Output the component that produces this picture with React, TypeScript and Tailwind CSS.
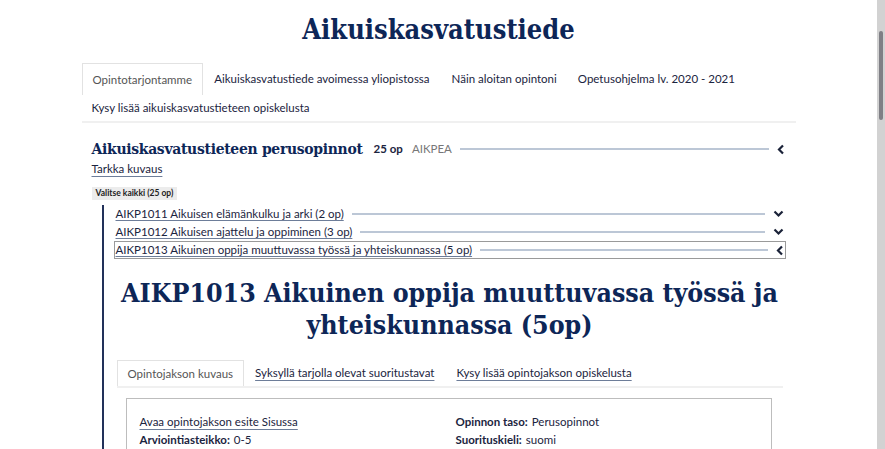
const navy = 'text-[#0d2657]';

function ChevronDown() {
  return (
    <svg width="11" height="8" viewBox="0 0 11 8" className="shrink-0">
      <path d="M1.5 1.5 L5.5 5.5 L9.5 1.5" fill="none" stroke="#1a2238" strokeWidth="2.2" />
    </svg>
  );
}

function ChevronLeft() {
  return (
    <svg width="8" height="11" viewBox="0 0 8 11" className="shrink-0">
      <path d="M6 1.5 L2 5.5 L6 9.5" fill="none" stroke="#1a2238" strokeWidth="2.2" />
    </svg>
  );
}

const courses = [
  { label: 'AIKP1011 Aikuisen elämänkulku ja arki (2 op)', open: false },
  { label: 'AIKP1012 Aikuisen ajattelu ja oppiminen (3 op)', open: false },
  { label: 'AIKP1013 Aikuinen oppija muuttuvassa työssä ja yhteiskunnassa (5 op)', open: true },
];

const slab = "font-['DejaVu_Serif_Condensed','DejaVu_Serif',serif] font-stretch-condensed font-bold";
const link = 'underline decoration-[#6d7d99] underline-offset-[3px]';

export default function App() {
  return (
    <div className="flex h-[449px] w-[885px] overflow-hidden bg-white font-['Lato',sans-serif] text-[#1b2440]">
      <div className="flex-1 min-w-0">
        <div className="mx-auto w-[714px]">
          <h1 className={`pt-[12px] pb-[15px] text-center text-[27px] leading-[36px] ${slab} ${navy}`}>
            Aikuiskasvatustiede
          </h1>

          {/* main tabs */}
          <div className="border-b-2 border-[#f0f0f0] text-[11.5px] whitespace-nowrap">
            <div className="flex h-[32px] items-center">
              <div className="flex h-full items-center border border-b-0 border-[#e2e2e2] px-[10px] text-[#555]">
                Opintotarjontamme
              </div>
              <div className="px-[11px]">Aikuiskasvatustiede avoimessa yliopistossa</div>
              <div className="px-[11px]">Näin aloitan opintoni</div>
              <div className="px-[10px]">Opetusohjelma lv. 2020 - 2021</div>
            </div>
            <div className="flex h-[26px] items-center px-[10px]">Kysy lisää aikuiskasvatustieteen opiskelusta</div>
          </div>

          {/* section */}
          <div className="pl-[10px] pr-[10px]">
            <div className="mt-[15px] flex items-center">
              <h2 className={`whitespace-nowrap text-[15.5px] leading-[22px] tracking-[-0.3px] ${slab} ${navy}`}>
                Aikuiskasvatustieteen perusopinnot
              </h2>
              <span className="ml-[11px] text-[11.5px] font-bold">25 op</span>
              <span className="ml-[9px] text-[11.5px] text-[#777]">AIKPEA</span>
              <div className="mx-[8px] h-[1.5px] flex-1 bg-[#bcc7d6]" />
              <div className="pr-[1px]"><ChevronLeft /></div>
            </div>
            <div className="text-[11.5px] leading-[18px]">
              <span className={link}>Tarkka kuvaus</span>
            </div>
            <div className="mt-[3px] inline-block bg-[#ececec] px-[4px] text-[8.5px] font-bold leading-[13px] text-[#222]">
              Valitse kaikki (25 op)
            </div>

            <div className="mt-[5px] ml-[10px] border-l-2 border-[#22315a] pl-[10px] pb-[40px]">
              <div className="-mt-[2px]">
                {courses.map((c) => (
                  <div
                    key={c.label}
                    className={`flex h-[18px] items-center text-[11.5px] ${c.open ? 'border border-[#9a9a9a] pl-[1px] pr-[1px]' : 'pl-[2px] pr-[2px]'}`}
                  >
                    <span className="whitespace-nowrap underline decoration-[#6d7d99] underline-offset-[2px]">{c.label}</span>
                    <div className="mx-[8px] h-[1.5px] flex-1 bg-[#bcc7d6]" />
                    {c.open ? <ChevronLeft /> : <ChevronDown />}
                  </div>
                ))}
              </div>

              <h2 className={`mt-[18px] whitespace-nowrap text-center text-[26.5px] leading-[32px] ${slab} ${navy}`}>
                AIKP1013 Aikuinen oppija muuttuvassa työssä ja
                <br />
                yhteiskunnassa (5op)
              </h2>

              <div className="mt-[19px] ml-[3px] mr-[3px] flex h-[28px] items-stretch whitespace-nowrap border-b-2 border-[#f0f0f0] text-[11.5px]">
                <div className="flex items-center border border-b-0 border-[#e2e2e2] px-[10px] text-[#555]">
                  Opintojakson kuvaus
                </div>
                <div className="flex items-center px-[11px]">
                  <span className={link}>Syksyllä tarjolla olevat suoritustavat</span>
                </div>
                <div className="flex items-center px-[11px]">
                  <span className={link}>Kysy lisää opintojakson opiskelusta</span>
                </div>
              </div>

              <div className="mt-[10px] ml-[12px] mr-[14px] border border-[#bdbdbd] px-[13px] pt-[14px] pb-[16px] text-[11.5px] leading-[17px]">
                <div className="grid grid-cols-2 gap-x-[14px]">
                  <div>
                    <div>
                      <span className={link}>Avaa opintojakson esite Sisussa</span>
                    </div>
                    <div className="mt-[1px]">
                      <span className="mr-[4px] font-bold">Arviointiasteikko:</span>0-5
                    </div>
                  </div>
                  <div>
                    <div>
                      <span className="mr-[4px] font-bold">Opinnon taso:</span>Perusopinnot
                    </div>
                    <div className="mt-[1px]">
                      <span className="mr-[4px] font-bold">Suorituskieli:</span>suomi
                    </div>
                  </div>
                </div>
              </div>
            </div>
          </div>
        </div>
      </div>

      {/* scrollbar */}
      <div className="flex w-[8px] shrink-0 flex-col bg-[#d2d2d2] pt-[31px]">
        <div className="mx-auto h-[89px] w-[4px] rounded-full bg-[#7f7f85]" />
      </div>
    </div>
  );
}
